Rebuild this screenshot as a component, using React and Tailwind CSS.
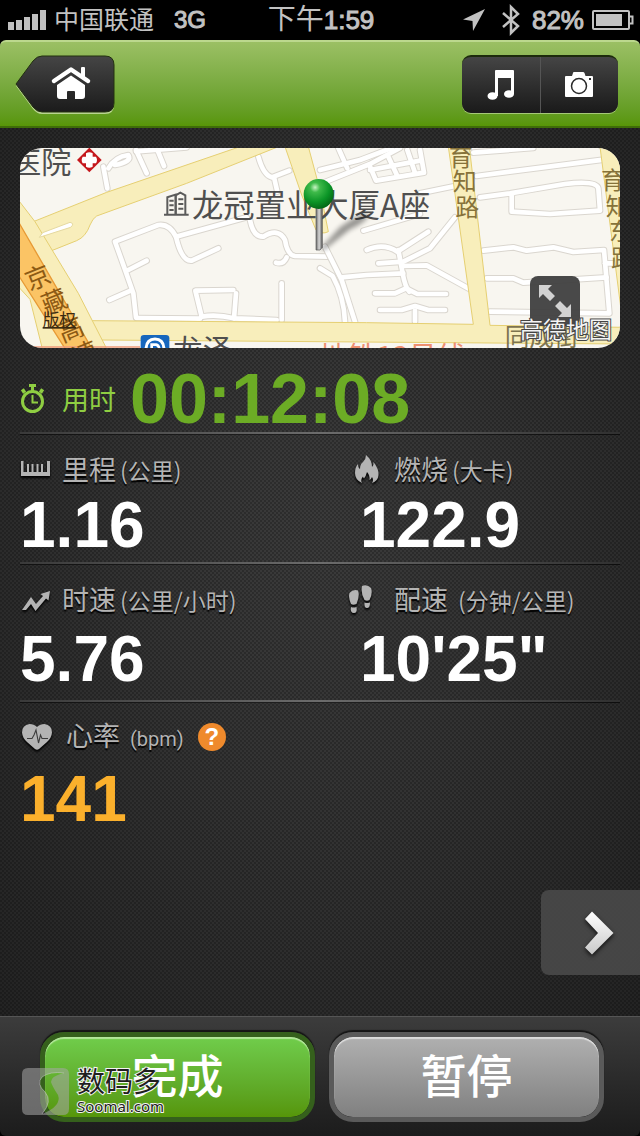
import React from "react";

const LEFT_LANES = [
  "M310 80 L322 145",
  "M325 85 Q345 50 385 45 Q398 65 345 75",
  "M408 30 L440 100",
  "M408 34 L560 22",
  "M470 24 L492 78",
  "M775 50 Q790 105 815 112 L868 92",
  "M822 112 L832 155",
  "M408 532 L400 460 L372 380 L345 305 L475 255 Q508 250 528 290 L740 232",
  "M528 290 Q545 365 575 362 L655 325",
  "M385 390 L440 362",
  "M328 480 L392 452",
  "M750 240 Q760 292 790 290 Q835 262 855 300 Q862 345 885 348 L985 350",
  "M860 352 Q850 375 828 368",
  "M845 430 V540",
  "M605 530 L586 452 L700 450",
  "M708 460 L702 535",
  "M605 530 Q650 522 702 535 L830 540",
  "M410 534 L600 536",
];

const RIGHT_LANES = [
  "M55 24 L82 85",
  "M0 132 L150 72 L240 24",
  "M0 90 L120 60 L215 24",
  "M148 75 L168 122 L312 98 L300 30",
  "M205 50 L232 108",
  "M262 30 L285 98",
  "M150 90 L300 62",
  "M130 272 L300 222",
  "M175 370 L250 365 L330 325 L405 232",
  "M140 330 Q190 308 232 335 L325 275",
  "M235 330 L248 400 Q255 440 268 455",
  "M245 378 L320 376 L445 445",
  "M165 460 H225 L258 445 L292 462 H378",
  "M180 510 H245 L285 498 L325 510 H375",
  "M285 512 V545",
  "M65 412 L140 405 L250 400",
  "M15 320 L65 420 L105 545",
  "M0 385 L38 408 Q72 470 75 545",
  "M460 38 L640 24",
  "M470 108 L880 55",
  "M300 160 L420 135",
  "M480 172 L570 160 L735 132 Q830 120 835 145 L840 212 L690 222 L575 215 V160",
  "M490 332 L580 322 L620 332 L700 322 L760 336 L852 330 L868 520 L510 515",
  "M500 415 L580 415 L610 428 L860 412",
  "M855 370 H890",
];

function Lanes({ paths }) {
  return (
    <g fill="none" strokeLinecap="round" strokeLinejoin="round">
      {paths.map((d) => (
        <path key={d} d={d} stroke="#dad6cf" strokeWidth="20" />
      ))}
      {paths.map((d) => (
        <path key={d} d={d} stroke="#ffffff" strokeWidth="14" />
      ))}
    </g>
  );
}

function StackedLabel({ chars, size, color, rotate = 0 }) {
  return (
    <g fill={color} fontSize={size} textAnchor="middle">
      {chars.map(([c, x, y]) => (
        <text key={c} x={x} y={y + size * 0.37} transform={`rotate(${rotate} ${x} ${y})`}>
          {c}
        </text>
      ))}
    </g>
  );
}

function MapDrawing() {
  return (
    <svg
      viewBox="60 24 1800 600"
      preserveAspectRatio="xMidYMid slice"
      className="block h-full w-full font-['Noto_Sans_CJK_SC',sans-serif]"
      role="img"
      aria-label="地图"
    >
      <defs>
        <radialGradient id="ball" cx="0.38" cy="0.28" r="0.75">
          <stop offset="0" stopColor="#c8f5c4" />
          <stop offset="0.22" stopColor="#3fba4a" />
          <stop offset="0.65" stopColor="#0a9426" />
          <stop offset="1" stopColor="#046415" />
        </radialGradient>
        <linearGradient id="needle" x1="0" x2="1" y1="0" y2="0">
          <stop offset="0" stopColor="#6a6a6a" />
          <stop offset="0.5" stopColor="#d8d8d8" />
          <stop offset="1" stopColor="#555555" />
        </linearGradient>
        <filter id="soft" x="-30%" y="-30%" width="160%" height="160%">
          <feGaussianBlur stdDeviation="8" />
        </filter>
      </defs>
      <rect x="60" y="24" width="1800" height="600" fill="#f8f6f0" />
      <Lanes paths={LEFT_LANES} />
      <g transform="translate(960 0)">
        <Lanes paths={RIGHT_LANES} />
      </g>
      <g fill="#f8eebb" stroke="#e5cf72" strokeWidth="3">
        <path d="M855 20 L925 20 L960 150 L985 275 Q965 285 948 270 L905 165Z" />
        <path d="M100 245 L320 157 L720 20 H835 L560 130 L290 228 Q278 235 270 255 Q258 290 230 302 L155 332Z" />
        <path d="M270 542 L1100 548 L1420 553 L1345 20 H1408 L1470 556 L1870 562 V612 L300 600Z" />
        <path d="M1800 20 L1862 500 V20Z" />
        <path d="M55 180 L105 245 L235 460 L322 630 H260 L55 250Z" />
        <path d="M55 405 V440 L90 478 L128 630 H205Z" />
      </g>
      <path d="M118 292 L128 278 L210 247 Q225 250 212 262Z" fill="#ffffff" stroke="#e5d9a0" strokeWidth="3" />
      <path d="M55 245 L278 630 H198 L55 405Z" fill="#fbc465" stroke="#e79a35" strokeWidth="4" />
      <path d="M60 621 H420" stroke="#ef9a7a" strokeWidth="5" />

      <g fill="#4f4f4f">
        <text x="34" y="99" fontSize="90">医院</text>
        <text x="576" y="230" fontSize="94">龙冠置业大厦A座</text>
        <text x="520" y="662" fontSize="88">龙泽</text>
      </g>
      <g fill="none" stroke="#5b5b5b" strokeWidth="6">
        <path d="M502 222 V172 L527 164 V222" />
        <path d="M527 222 V166 L541 158 L556 166 V222 M492 224 H566" />
        <path d="M508 182 H521 M508 196 H521 M508 210 H521 M535 178 H550 M535 192 H550 M535 206 H550" />
      </g>
      <g transform="translate(268 60)">
        <path d="M0 -37 L37 0 L0 37 L-37 0Z" fill="#c5181d" />
        <path
          d="M-10 -20 Q0 -26 10 -20 V-10 H20 Q26 0 20 10 H10 V20 Q0 26 -10 20 V10 H-20 Q-26 0 -20 -10 H-10Z"
          fill="#ffffff"
        />
      </g>
      <rect x="422" y="585" width="86" height="70" rx="10" fill="#1666bd" />
      <path d="M438 630 Q438 597 465 597 Q492 597 492 630" fill="none" stroke="#ffffff" strokeWidth="9" />
      <path d="M455 630 V614 H468 Q478 616 478 630" fill="none" stroke="#ffffff" strokeWidth="8" />
      <text x="958" y="680" fontSize="86" fill="#ee9070">
        地铁13号线
      </text>
      <text x="1514" y="617" fontSize="74" fill="#7d744f">
        同成街
      </text>
      <StackedLabel size={72} color="#86723a" chars={[["育", 1382, 50], ["知", 1394, 122], ["路", 1402, 202]]} />
      <StackedLabel size={70} color="#86723a" chars={[["育", 1838, 122], ["知", 1852, 200], ["东", 1862, 275], ["路", 1868, 355]]} />
      <StackedLabel
        size={76}
        color="#8c5a14"
        rotate={-22}
        chars={[["京", 113, 412], ["藏", 163, 484], ["高", 212, 568], ["速", 255, 640]]}
      />
      <text x="128" y="558" fontSize="50" fill="#3a2a10" textDecoration="underline">
        版权
      </text>

      <path d="M960 328 L1020 262 Q1070 225 1105 218 Q1110 240 1050 268 L972 330Z" fill="#000000" opacity="0.4" filter="url(#soft)" />
      <path d="M948 195 H967 V322 L960 330 H948Z" fill="url(#needle)" stroke="#555555" strokeWidth="2" />
      <circle cx="956" cy="162" r="45" fill="url(#ball)" />
    </svg>
  );
}

function SignalIcon() {
  return (
    <svg viewBox="0 0 38 20" className="h-5 w-[38px]" fill="#bfbfbf" aria-hidden="true">
      <rect x="0" y="12" width="6" height="8" />
      <rect x="8" y="10" width="6" height="10" />
      <rect x="16" y="7" width="6" height="13" />
      <rect x="24" y="4" width="6" height="16" />
      <rect x="32" y="0" width="6" height="20" />
    </svg>
  );
}

function StatusBar() {
  return (
    <div className="flex h-10 items-center bg-black pr-1.5 pl-2 text-[26px] leading-10 text-[#c2c2c2]">
      <div className="flex flex-1 items-center gap-2">
        <SignalIcon />
        <span className="text-[25px]">中国联通</span>
        <span className="ml-3 text-2xl [-webkit-text-stroke:1px_#c2c2c2]">3G</span>
      </div>
      <div className="flex items-center">
        <span className="text-[28px]">下午</span>
        <span className="[-webkit-text-stroke:1px_#c2c2c2]">1:59</span>
      </div>
      <div className="flex flex-1 items-center justify-end">
        <svg viewBox="0 0 24 24" className="mr-4 size-6" fill="#c2c2c2" aria-hidden="true">
          <path d="M23 1 L11 23 L10.500 13 L1 11.500Z" />
        </svg>
        <svg viewBox="0 0 18 32" className="mr-3 h-8 w-[18px]" fill="none" stroke="#c2c2c2" strokeWidth="2.500" aria-hidden="true">
          <path d="M1 9 L16 22 L9 29 V3 L16 10 L1 23" />
        </svg>
        <span className="mr-2 [-webkit-text-stroke:1px_#c2c2c2]">82%</span>
        <svg viewBox="0 0 42 20" className="h-5 w-[42px]" aria-hidden="true">
          <rect x="1" y="1" width="36" height="18" rx="1" fill="none" stroke="#c2c2c2" strokeWidth="2" />
          <rect x="4" y="4" width="26" height="12" fill="#c2c2c2" />
          <path d="M37 6.500 H40.500 V13.500 H37" fill="none" stroke="#c2c2c2" strokeWidth="2" />
        </svg>
      </div>
    </div>
  );
}

function Header() {
  return (
    <header className="flex h-[88px] items-center justify-between rounded-t-md border-t-2 border-b-2 border-t-[#bcd88e] border-b-[#3f6d08] bg-linear-to-b from-[#9bc064] to-[#589607] pr-[22px] pl-[15px]">
      <button type="button" aria-label="主页" className="h-[60px] w-[100px]">
        <svg viewBox="0 0 100 60" className="size-full">
          <defs>
            <linearGradient id="dark" x1="0" x2="0" y1="0" y2="1">
              <stop offset="0" stopColor="#454545" />
              <stop offset="1" stopColor="#1b1b1b" />
            </linearGradient>
          </defs>
          <path d="M27 3 H90 Q99 3 99 12 V51 Q99 60 90 60 H27 Q22 60 18 55 L1 32 L18 8 Q22 3 27 3Z" fill="#b9d490" />
          <path d="M27 2 H90 Q99 2 99 11 V49 Q99 58 90 58 H27 Q22 58 18 53 L1 30 L18 7 Q22 2 27 2Z" fill="url(#dark)" stroke="#22300f" />
          <path d="M39 27 L56 15.500 L73 27" fill="none" stroke="#ffffff" strokeWidth="4.500" strokeLinecap="round" strokeLinejoin="round" />
          <path d="M66 14 Q66 13 67 13 H69 Q70 13 70 14 V24 L66 21Z" fill="#ffffff" />
          <path d="M42 31 L56 21.500 L70 31 V42 Q70 45 67 45 H60 V38 Q60 37 59 37 H53 Q52 37 52 38 V45 H45 Q42 45 42 42Z" fill="#ffffff" />
        </svg>
      </button>
      <div className="flex h-[58px] w-[156px] overflow-hidden rounded-[9px] border-t-2 border-[#1d2b0c] bg-linear-to-b from-[#454545] to-[#1a1a1a] shadow-[0_1px_0_#a5c878]">
        <button type="button" aria-label="音乐" className="flex flex-1 items-center justify-center border-r border-[#555555]">
          <svg viewBox="0 0 28 30" className="h-[30px] w-7" fill="#ffffff">
            <path d="M8 1 Q8 0 9 0 H26 Q27 0 27 1 V24 H24 V8 H11 V26 H8Z" />
            <ellipse cx="5.500" cy="26" rx="5" ry="3.800" />
            <ellipse cx="22" cy="24" rx="5" ry="3.800" />
          </svg>
        </button>
        <button type="button" aria-label="拍照" className="flex flex-1 items-center justify-center">
          <svg viewBox="0 0 30 26" className="h-[26px] w-[30px]">
            <path d="M1 5 Q1 4 2 4 H8 L9 1 Q9 0 10 0 H19 Q20 0 20.500 1 L21.500 4 H28 Q29 4 29 5 V24 Q29 25 28 25 H2 Q1 25 1 24Z" fill="#ffffff" />
            <circle cx="15" cy="14" r="7.500" fill="none" stroke="#2a2a2a" strokeWidth="1.500" />
            <rect x="25" y="6" width="2" height="2" fill="#2a2a2a" />
          </svg>
        </button>
      </div>
    </header>
  );
}

function StopwatchIcon() {
  return (
    <svg viewBox="0 0 26 30" className="h-[30px] w-[26px]" fill="none" stroke="#8fce42" aria-hidden="true">
      <circle cx="12.500" cy="17.500" r="10" strokeWidth="3" />
      <path d="M9 1.500 H16 M12.500 1 V7" strokeWidth="3" />
      <path d="M2 8 L5 6 M23 8 L20 6" strokeWidth="4" />
      <path d="M12.500 11 V18.500 H18" strokeWidth="2" />
    </svg>
  );
}

function RulerIcon() {
  return (
    <svg viewBox="0 0 30 18" className="h-[18px] w-[30px] drop-shadow-[0_2px_1px_#000]" aria-hidden="true">
      <path
        d="M1 1 H3.500 V12 H7 V4 H9 V12 H11.500 V4 H13.500 V12 H16.500 V4 H18.500 V12 H21 V4 H23 V12 H27 V1 H30 V16 H1Z"
        fill="#b4b4b4"
      />
    </svg>
  );
}

function FlameIcon() {
  return (
    <svg viewBox="0 0 24 28" className="ml-[7px] h-7 w-6 drop-shadow-[0_2px_1px_#000]" fill="#b4b4b4" aria-hidden="true">
      <path d="M11 0 Q17 5 17 12 Q19 10 18.500 7 Q24 14 23.500 20 Q23 26 17 28 Q19 25 17 22 Q16 24.500 14.500 25 Q15 20 12 17 Q11 21 9 23.500 Q8 22.500 8 21.500 Q5 25 7 28 Q0 25 0 18 Q0 12 3 9 Q3 13 5 14 Q5 9 8 7 Q11 4 11 0Z" />
    </svg>
  );
}

function ZigzagIcon() {
  return (
    <svg viewBox="0 0 30 22" className="mt-1 ml-px h-[22px] w-[30px] drop-shadow-[0_2px_1px_#000]" fill="#b4b4b4" aria-hidden="true">
      <path d="M1 20 L10 7 L15 14 L22 6 L19.500 4 L29 1 L27.500 10.500 L25 8.500 L14.500 21 L10 14 L5 20Z" />
    </svg>
  );
}

function FeetIcon() {
  return (
    <svg viewBox="0 0 26 30" className="h-[30px] w-[26px] drop-shadow-[0_2px_1px_#000]" fill="#b4b4b4" aria-hidden="true">
      <path d="M3 20 Q0 13 1.500 9 Q5 5 10 6.500 Q12 12 8.500 20 Q5 21.500 3 20Z" />
      <path d="M3 23 Q5 24 8.500 23 Q9.500 29 6 29 Q2 29 3 23Z" />
      <path d="M14 2 Q19 0 23 4 Q25 9 21.500 16 Q19 17.500 16.500 16 Q12.500 9 14 2Z" />
      <path d="M16.500 18.500 Q19 19.500 22 18.500 Q22 24 19 24 Q16 24 16.500 18.500Z" />
    </svg>
  );
}

function HeartIcon() {
  return (
    <svg viewBox="0 0 30 26" className="ml-[2px] h-[26px] w-[30px] drop-shadow-[0_2px_1px_#000]" aria-hidden="true">
      <path d="M15 3 Q18 0 22.500 0 Q30 1 30 8.500 Q29.500 14 25 18 L17 25 Q15 26.500 13 25 L5 18 Q0.500 14 0 8.500 Q0 1 7.500 0 Q12 0 15 3Z" fill="#b4b4b4" />
      <path d="M5 14.500 H10 L12 11 L14 6 L16.500 19 L18.500 11 L20 14.500 H26" fill="none" stroke="#3c3c3c" strokeWidth="1.100" />
    </svg>
  );
}

function Label({ icon, slot, name, unit, unitStyle = "ml-1 text-[23px]", children }) {
  return (
    <div className="flex h-8 items-center">
      <span className={`flex shrink-0 items-center ${slot}`}>{icon}</span>
      <h2 className="flex items-baseline font-['Noto_Sans_CJK_SC',sans-serif] text-[27px] leading-8 whitespace-nowrap text-[#b4b4b4] [text-shadow:0_2px_1px_#000]">
        {name}
        <span className={`leading-8 ${unitStyle}`}>{unit}</span>
      </h2>
      {children}
    </div>
  );
}

function Value({ children, className = "" }) {
  return <p className={`text-[64px] leading-16 font-bold ${className}`}>{children}</p>;
}

function Divider() {
  return (
    <div
      role="separator"
      className="h-[3px] border-b border-black/70 bg-linear-to-r from-[#3a3a3a] via-[#6c6c6c] to-[#303030]"
    />
  );
}

function Workout() {
  return (
    <main className="flex flex-1 flex-col bg-[radial-gradient(circle_at_1px_1px,rgba(0,0,0,0.22)_1px,transparent_1.5px),radial-gradient(circle_at_1px_1px,rgba(0,0,0,0.22)_1px,transparent_1.5px),radial-gradient(ellipse_at_50%_45%,#3b3b3b_0%,#323232_45%,#232323_100%)] bg-size-[4px_4px,4px_4px,100%_100%] bg-position-[0_0,2px_2px,0_0]">
      <div className="px-5 pt-5">
        <section className="relative h-[200px] overflow-hidden rounded-[22px]">
          <MapDrawing />
          <button
            type="button"
            aria-label="展开地图"
            className="absolute right-10 bottom-[22px] flex size-[50px] items-center justify-center rounded-lg bg-[#3f3f3f]/95"
          >
            <svg viewBox="0 0 34 34" className="size-[34px]" fill="#d2d2d2">
              <path d="M1 1 H14 L10 5 L17 12 L12 17 L5 10 L1 14Z" />
              <path d="M33 33 H20 L24 29 L17 22 L22 17 L29 24 L33 20Z" />
            </svg>
          </button>
          <span className="absolute right-2 bottom-1 text-[23px] leading-7 text-[#f4f4f4] [-webkit-text-stroke:2px_#444] [paint-order:stroke]">
            高德地图
          </span>
        </section>

        <section className="flex items-center pt-5 pb-0.5">
          <span className="w-[42px] shrink-0">
            <StopwatchIcon />
          </span>
          <h2 className="w-[68px] shrink-0 font-['Noto_Sans_CJK_SC',sans-serif] text-[27px] leading-8 whitespace-nowrap text-[#8fce42]">
            用时
          </h2>
          <p className="text-[70px] leading-[62px] font-bold text-[#6cac25]">00:12:08</p>
        </section>
        <Divider />

        <section className="grid grid-cols-[41fr_34fr] gap-y-2 pt-[18px] pb-[5px]">
          <Label icon={<RulerIcon />} slot="w-[42px]" name="里程" unit="(公里)" />
          <Label icon={<FlameIcon />} slot="w-[46px]" name="燃烧" unit="(大卡)" />
          <Value className="text-white">1.16</Value>
          <Value className="pl-3 text-white">122.9</Value>
        </section>
        <Divider />

        <section className="grid grid-cols-[41fr_34fr] gap-y-3 pt-[18px] pb-[9px]">
          <Label icon={<ZigzagIcon />} slot="w-[42px]" name="时速" unit="(公里/小时)" />
          <Label icon={<FeetIcon />} slot="w-[46px]" name="配速" unit="(分钟/公里)" unitStyle="ml-2.5 text-[23px]" />
          <Value className="text-white">5.76</Value>
          <Value className="pl-3 text-white">10'25"</Value>
        </section>
        <Divider />

        <section className="grid gap-y-3.5 pt-[18px]">
          <Label
            icon={<HeartIcon />}
            slot="w-[46px]"
            name="心率"
            unit="(bpm)"
            unitStyle="ml-2.5 font-[Roboto,sans-serif] text-xl"
          >
            <button
              type="button"
              aria-label="心率说明"
              className="ml-3.5 flex size-7 items-center justify-center rounded-full bg-[#ef8a2c] text-2xl leading-7 font-bold text-white"
            >
              ?
            </button>
          </Label>
          <Value className="text-[#fbb02c]">141</Value>
        </section>
      </div>

      <button
        type="button"
        aria-label="下一页"
        className="mt-auto mb-[41px] flex h-[85px] w-[99px] items-center justify-center self-end rounded-l-lg bg-[#484848]/95 pl-4"
      >
        <svg viewBox="0 0 30 44" className="h-11 w-[30px] drop-shadow-[0_2px_2px_#111]">
          <defs>
            <linearGradient id="chev" x1="0" x2="0" y1="0" y2="1">
              <stop offset="0" stopColor="#ffffff" />
              <stop offset="1" stopColor="#c9c9c9" />
            </linearGradient>
          </defs>
          <path d="M1 8 L8 0.500 L29.500 22 L8 43.500 L1 36.500 L14 22Z" fill="url(#chev)" />
        </svg>
      </button>
    </main>
  );
}

function Watermark() {
  return (
    <div className="pointer-events-none absolute top-[51px] left-[22px] flex items-center gap-2">
      <svg viewBox="0 0 47 47" className="size-[47px]" aria-hidden="true">
        <path
          d="M6 0 H41 Q47 0 47 6 V41 Q47 47 41 47 H6 Q0 47 0 41 V6 Q0 0 6 0Z M42 5 Q28 3 20 9 Q14 16 23 24 Q31 33 20 46 Q40 38 36 27 Q30 18 29 14 Q29 8 42 5Z"
          fill="#a8a8a8"
          fillOpacity="0.55"
          fillRule="evenodd"
        />
        <path d="M42 5 Q28 3 20 9 Q14 16 23 24 Q31 33 20 46" fill="none" stroke="#d0d0d0" strokeOpacity="0.5" />
      </svg>
      <div className="text-[#1f1f1f] [-webkit-text-stroke:2px_#f4f4f4] [paint-order:stroke]">
        <p className="text-[28px] leading-7">数码多</p>
        <p className="font-['Noto_Sans',sans-serif] text-[15px] leading-[18px]">Soomal.com</p>
      </div>
    </div>
  );
}

function Footer() {
  return (
    <footer className="relative flex h-[120px] gap-3.5 rounded-b-md border-t border-[#555555] bg-linear-to-b from-[#3c3c3c] to-[#1c1c1c] pt-[15px] pr-9 pl-10">
      <button
        type="button"
        className="h-[90px] flex-1 rounded-[24px] border-[5px] border-[#35601c] bg-linear-to-b from-[#70cd4b] to-[#569608] bg-clip-padding text-[46px] leading-none font-medium text-white shadow-[0_-2px_1px_#151515,inset_0_2px_1px_#b4e89b]"
      >
        完成
      </button>
      <button
        type="button"
        className="h-[90px] flex-1 rounded-[24px] border-[5px] border-[#5a5a5a] bg-linear-to-b from-[#b0b0b0] to-[#808080] bg-clip-padding text-[46px] leading-none font-medium text-white shadow-[0_-2px_1px_#151515,inset_0_2px_1px_#dddddd]"
      >
        暂停
      </button>
      <Watermark />
    </footer>
  );
}

export default function App() {
  return (
    <div className="flex min-h-screen flex-col bg-black font-['Liberation_Sans','Noto_Sans_CJK_SC',sans-serif]">
      <StatusBar />
      <Header />
      <Workout />
      <Footer />
    </div>
  );
}
